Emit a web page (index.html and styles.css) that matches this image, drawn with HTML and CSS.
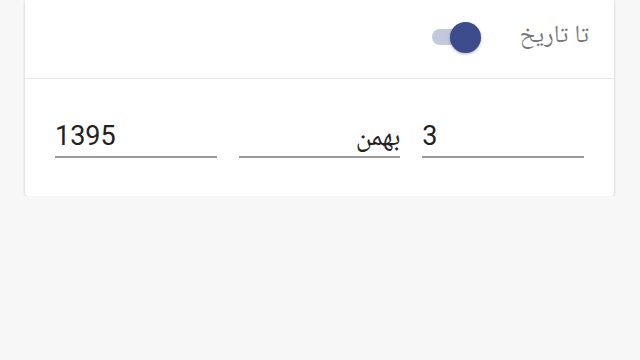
FILE: index.html
```html
<!DOCTYPE html>
<html lang="fa">
    <head>
        <meta charset="utf-8">
        <title>تا تاریخ</title>
        <link rel="stylesheet" href="styles.css">
    </head>
    <body>
        <div class="card" dir="rtl">
            <div class="card-head">
                <span class="label">تا تاریخ</span>
                <span class="switch">
                    <span class="switch-track"></span>
                    <span class="switch-thumb"></span>
                </span>
            </div>
            <div class="date-row">
                <div class="field" dir="ltr">3</div>
                <div class="field">بهمن</div>
                <div class="field" dir="ltr">1395</div>
            </div>
        </div>
    </body>
</html>
```

FILE: styles.css
```css
body{
    margin:0;
    background-color:#f7f7f7;
    font-family:Roboto, "Noto Naskh Arabic", "Noto Sans Arabic", "DejaVu Sans", sans-serif;
}

.card{
    margin:0 26px 0 25px;
    background-color:white;
    border-radius:0 0 3px 3px;
    box-shadow:0 1px 3px rgba(0, 0, 0, 0.2);
}

.card-head{
    display:flex;
    align-items:center;
    height:79px;
    padding:0 25px;
    border-bottom:1px solid #e6e6e6;
    box-sizing:border-box;
}

.label{
    font-size:24.5px;
    color:#777;
    margin-left:38px;
    margin-top:-4px;
}

.switch{
    position:relative;
    width:50px;
    height:32px;
    margin-top:-4px;
}

.switch-track{
    position:absolute;
    left:0;
    top:8px;
    width:42px;
    height:16px;
    border-radius:8px;
    background-color:#c4c8dc;
}

.switch-thumb{
    position:absolute;
    right:1px;
    top:1px;
    width:31px;
    height:31px;
    border-radius:50%;
    background-color:#3b4b8c;
    box-shadow:0 1px 3px rgba(0, 0, 0, 0.3);
}

.date-row{
    display:flex;
    gap:22px;
    padding:37px 30px 38px;
}

.field{
    flex:1;
    font-size:27px;
    color:#222;
    line-height:40px;
    border-bottom:2px solid #9a9a9a;
}
```
